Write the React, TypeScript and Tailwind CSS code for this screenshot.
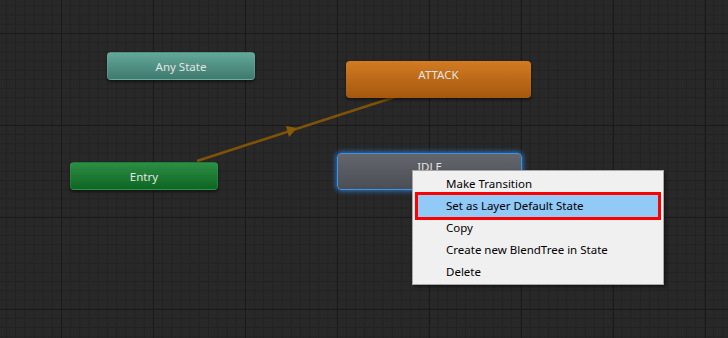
const menuItems = [
  'Make Transition',
  'Set as Layer Default State',
  'Copy',
  'Create new BlendTree in State',
  'Delete',
];

function StateNode({
  label,
  className,
  textClass = 'pt-[5px]',
}: {
  label: string;
  className: string;
  textClass?: string;
}) {
  return (
    <div className={`absolute rounded-[4px] text-center text-[11.5px] text-[#e4e4e4] ${className}`}>
      <div className={textClass}>{label}</div>
    </div>
  );
}

export default function App() {
  return (
    <div
      className="relative w-[728px] h-[338px] overflow-hidden bg-[#282828] font-['Noto_Sans',sans-serif] [background-image:linear-gradient(#1a1a1a_1px,transparent_1px),linear-gradient(90deg,#1a1a1a_1px,transparent_1px),linear-gradient(#222222_1px,transparent_1px),linear-gradient(90deg,#222222_1px,transparent_1px)] [background-size:92px_92px,92px_92px,9.2px_9.2px,9.2px_9.2px] [background-position:61px_33px]"
    >
      {/* transition Entry -> ATTACK */}
      <svg className="absolute inset-0" width="728" height="338">
        <line x1="197" y1="161" x2="395" y2="97" stroke="#7e5208" strokeWidth="2.5" />
        <polygon points="297,128 286,126 289,137" fill="#8a5a08" />
      </svg>

      <StateNode
        label="Any State"
        className="left-[107px] top-[52px] w-[148px] h-[28px] bg-gradient-to-b from-[#62a898] to-[#3f7a6e] border border-[#6fb3a3]/40 shadow-[0_2px_3px_rgba(0,0,0,0.5)]"
      />
      <StateNode
        label="Entry"
        className="left-[70px] top-[162px] w-[148px] h-[28px] bg-gradient-to-b from-[#2c8e44] to-[#0c6622] border border-[#3a9a50]/40 shadow-[0_2px_3px_rgba(0,0,0,0.5)]"
      />
      <StateNode
        label="ATTACK"
        className="left-[346px] top-[61px] w-[185px] h-[37px] bg-gradient-to-b from-[#d27b22] to-[#a5580e] shadow-[0_2px_3px_rgba(0,0,0,0.5)]"
        textClass="pt-[5px]"
      />
      <StateNode
        label="IDLE"
        className="left-[337px] top-[153px] w-[185px] h-[37px] bg-gradient-to-b from-[#63666c] to-[#4b4e54] border border-[#3f93e6] shadow-[0_0_5px_1px_rgba(46,127,214,0.9)]"
        textClass="pt-[4px]"
      />

      {/* context menu */}
      <div className="absolute left-[412px] top-[170px] w-[252px] h-[115px] bg-[#f0f0f0] border border-[#a7a7a7] shadow-[2px_2px_3px_rgba(0,0,0,0.45)] pt-[2px] text-[11.5px] text-black">
        {menuItems.map((item, i) => (
          <div
            key={item}
            className={
              i === 1
                ? 'h-[28px] -my-[3px] mx-[2px] border-[3px] border-[#ff0000] bg-[#91c9f7] pl-[28px] flex items-center relative'
                : 'h-[22px] pl-[33px] flex items-center'
            }
          >
            {item}
          </div>
        ))}
      </div>
    </div>
  );
}
